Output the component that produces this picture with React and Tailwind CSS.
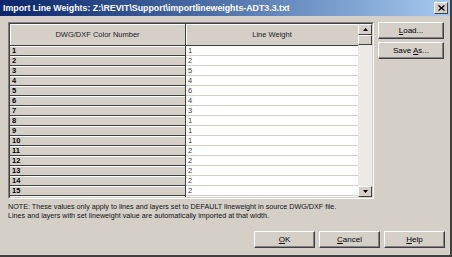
import React from 'react';

const rows = [
  ['1', '1'], ['2', '2'], ['3', '5'], ['4', '4'], ['5', '6'], ['6', '4'], ['7', '3'], ['8', '1'],
  ['9', '1'], ['10', '1'], ['11', '2'], ['12', '2'], ['13', '2'], ['14', '2'], ['15', '2'], ['16', '2'],
];

const font = { fontFamily: 'Tahoma, "Liberation Sans", Arial, sans-serif' };

function Btn({ label, u, className = '' }) {
  const i = label.indexOf(u);
  return (
    <button
      className={`h-[17px] flex items-center justify-center bg-[#d4d0c8] border border-t-white border-l-white border-r-[#404040] border-b-[#404040] shadow-[inset_-1px_-1px_0_#808080] text-[8px] text-black ${className}`}
    >
      <span>
        {label.slice(0, i)}
        <span className="underline">{u}</span>
        {label.slice(i + 1)}
      </span>
    </button>
  );
}

function ScrollBtn({ down }) {
  return (
    <div className="h-[11px] w-full bg-[#d4d0c8] border border-t-white border-l-white border-r-[#404040] border-b-[#404040] flex items-center justify-center">
      <svg width="5" height="3" viewBox="0 0 5 3">
        {down ? <polygon points="0,0 5,0 2.5,3" fill="#000" /> : <polygon points="0,3 5,3 2.5,0" fill="#000" />}
      </svg>
    </div>
  );
}

export default function App() {
  return (
    <div className="w-[452px] h-[257px] bg-[#d4d0c8] flex flex-col overflow-hidden border-r-2 border-b-2 border-r-[#404040] border-b-[#404040]" style={font}>
      {/* Title bar */}
      <div className="h-[16px] bg-gradient-to-r from-[#0a246a] to-[#a6caf0] flex items-center justify-between pl-[3px] pr-[2px]">
        <span className="text-white font-bold text-[8.8px] leading-none whitespace-nowrap">
          Import Line Weights: Z:\REVIT\Support\importlineweights-ADT3.3.txt
        </span>
        <div className="w-[14px] h-[12px] bg-[#d4d0c8] border border-t-white border-l-white border-r-[#404040] border-b-[#404040] flex items-center justify-center">
          <svg width="7" height="6" viewBox="0 0 7 6">
            <path d="M0.5 0.5 L6.5 5.5 M6.5 0.5 L0.5 5.5" stroke="#000" strokeWidth="1.4" />
          </svg>
        </div>
      </div>

      {/* Body */}
      <div className="flex-1 flex flex-col pl-[8px] pt-[6px]">
        <div className="flex">
          {/* Grid */}
          <div className="w-[366px] h-[177px] border border-t-[#808080] border-l-[#808080] border-r-white border-b-white">
            <div className="w-full h-full border border-t-[#404040] border-l-[#404040] border-r-[#d4d0c8] border-b-[#d4d0c8] flex overflow-hidden">
              <div className="flex-1 flex flex-col overflow-hidden">
                {/* Header */}
                <div className="h-[22px] shrink-0 flex border-b border-[#404040] text-[7.5px] text-[#202020]">
                  <div className="w-[176px] border-r border-[#404040] flex items-center justify-center shadow-[inset_1px_1px_0_#fff]">
                    DWG/DXF Color Number
                  </div>
                  <div className="flex-1 flex items-center justify-center shadow-[inset_1px_1px_0_#fff]">Line Weight</div>
                </div>
                {rows.map(([n, v], i) => (
                  <div
                    key={n}
                    className={`shrink-0 flex text-[7.5px] leading-[9px] overflow-hidden ${i === rows.length - 1 ? 'h-[4px]' : 'h-[10px]'}`}
                  >
                    <div className="w-[176px] border-r border-b border-[#404040] bg-[#d4d0c8] pl-[2px] font-bold text-black shadow-[inset_0_1px_0_#fff]">
                      {n}
                    </div>
                    <div className="flex-1 bg-white border-b border-[#d4d0c8] pl-[2px] text-[#404040]">{v}</div>
                  </div>
                ))}
              </div>
              {/* Scrollbar */}
              <div className="w-[14px] shrink-0 flex flex-col bg-[#eceae6]">
                <ScrollBtn />
                <div className="h-[10px] bg-[#d4d0c8] border border-t-white border-l-white border-r-[#404040] border-b-[#404040]" />
                <div className="flex-1" />
                <ScrollBtn down />
              </div>
            </div>
          </div>

          {/* Side buttons */}
          <div className="ml-[4px] w-[66px] flex flex-col gap-[3px]">
            <Btn label="Load..." u="L" />
            <Btn label="Save As..." u="A" />
          </div>
        </div>

        {/* Note */}
        <div className="mt-[3px] text-[7.2px] leading-[9px] text-[#101010]">
          <p>NOTE: These values only apply to lines and layers set to DEFAULT lineweight in source DWG/DXF file.</p>
          <p>Lines and layers with set lineweight value are automatically imported at that width.</p>
        </div>

        {/* Bottom buttons */}
        <div className="mt-[11px] flex justify-end gap-[4px] pr-[5px]">
          <Btn label="OK" u="O" className="w-[61px]" />
          <Btn label="Cancel" u="C" className="w-[61px]" />
          <Btn label="Help" u="H" className="w-[61px]" />
        </div>
      </div>
    </div>
  );
}
